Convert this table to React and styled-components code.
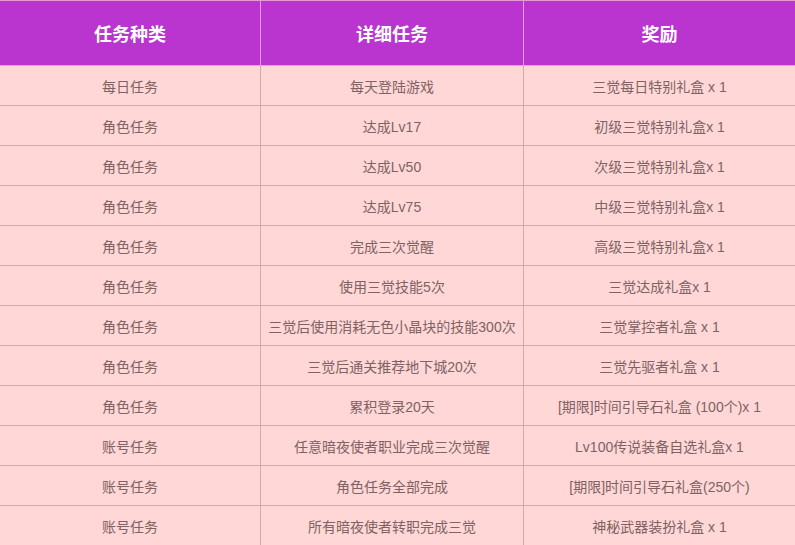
import React from 'react';
import styled, { createGlobalStyle } from 'styled-components';

const GlobalStyle = createGlobalStyle`
  html, body {
    margin: 0;
    padding: 0;
    background: #ffffff;
  }
  body {
    font-family: "Liberation Sans", "Noto Sans CJK SC", sans-serif;
    overflow: hidden;
  }
`;

const Table = styled.table`
  width: 795px;
  margin-left: -1px;
  border-collapse: collapse;
  table-layout: fixed;
`;

const HeadCell = styled.th`
  height: 64px;
  padding: 0;
  background: #ba34cf;
  color: #ffffff;
  font-size: 18px;
  font-weight: bold;
  text-align: center;
  border: 1px solid #e69bd6;
  border-bottom-color: #e0a8c0;
`;

const Cell = styled.td`
  height: 39px;
  padding: 0;
  background: #ffd7d7;
  color: #806263;
  font-size: 14px;
  text-align: center;
  white-space: nowrap;
  border: 1px solid #d6a6aa;
  border-right-color: ${p => (p.last ? '#efa6c2' : '#d6a6aa')};
`;

const rows = [
  ['每日任务', '每天登陆游戏', '三觉每日特别礼盒 x 1'],
  ['角色任务', '达成Lv17', '初级三觉特别礼盒x 1'],
  ['角色任务', '达成Lv50', '次级三觉特别礼盒x 1'],
  ['角色任务', '达成Lv75', '中级三觉特别礼盒x 1'],
  ['角色任务', '完成三次觉醒', '高级三觉特别礼盒x 1'],
  ['角色任务', '使用三觉技能5次', '三觉达成礼盒x 1'],
  ['角色任务', '三觉后使用消耗无色小晶块的技能300次', '三觉掌控者礼盒 x 1'],
  ['角色任务', '三觉后通关推荐地下城20次', '三觉先驱者礼盒 x 1'],
  ['角色任务', '累积登录20天', '[期限]时间引导石礼盒 (100个)x 1'],
  ['账号任务', '任意暗夜使者职业完成三次觉醒', 'Lv100传说装备自选礼盒x 1'],
  ['账号任务', '角色任务全部完成', '[期限]时间引导石礼盒(250个)'],
  ['账号任务', '所有暗夜使者转职完成三觉', '神秘武器装扮礼盒 x 1'],
];

export default function App() {
  return (
    <>
      <GlobalStyle />
      <Table>
        <colgroup>
          <col style={{ width: '261px' }} />
          <col style={{ width: '263px' }} />
          <col style={{ width: '272px' }} />
        </colgroup>
        <thead>
          <tr>
            <HeadCell>任务种类</HeadCell>
            <HeadCell>详细任务</HeadCell>
            <HeadCell>奖励</HeadCell>
          </tr>
        </thead>
        <tbody>
          {rows.map((r, i) => (
            <tr key={i}>
              <Cell>{r[0]}</Cell>
              <Cell>{r[1]}</Cell>
              <Cell last>{r[2]}</Cell>
            </tr>
          ))}
        </tbody>
      </Table>
    </>
  );
}
